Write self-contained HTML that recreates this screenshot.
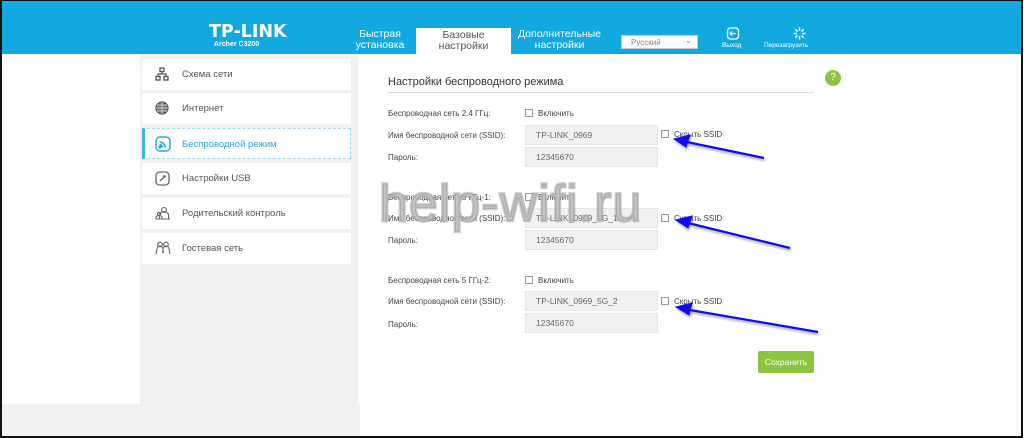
<!DOCTYPE html>
<html><head><meta charset="utf-8"><style>
*{margin:0;padding:0;box-sizing:border-box}
body{width:1024px;height:438px;position:relative;background:#fff;font-family:"Liberation Sans","DejaVu Sans",sans-serif;overflow:hidden}
.frame{position:absolute;left:0;top:0;width:1023px;height:438px;border:2px solid #111;border-top-width:1px}
.hdr{position:absolute;left:2px;top:1px;width:1019px;height:53px;background:#12a9e0}
.abs{position:absolute}
.logo{left:209px;top:22px;color:#fff;font-weight:bold;font-size:17.5px;letter-spacing:0px;font-family:"DejaVu Sans",sans-serif}
.model{left:214px;top:41px;color:#fff;font-weight:bold;font-size:7px}
.tab{color:#fff;font-size:10.5px;text-align:center;line-height:11px}
.tabsel{left:416px;top:28px;width:95px;height:26px;background:#fff;color:#555;padding-top:2px}
.side{left:140px;top:54px;width:218px;height:350px;background:#f1f1f1}
.bot{left:2px;top:404px;width:358px;height:32px;background:#f1f1f1}
.item{position:absolute;left:142px;width:209px;height:31px;background:#fff;font-size:9.5px;color:#555;padding-left:40px;line-height:31px}
.item svg{position:absolute;left:13px;top:8px}
.sel{border:1px dashed #9dd6ee;border-left:3px solid #39b4e3;color:#2aa7dc;padding-left:37px}
.sel svg{left:10px;top:7px}
.lab{position:absolute;left:388px;font-size:8px;color:#444}
.cb{position:absolute;width:8px;height:8px;border:1px solid #999;background:#fff}
.cbl{position:absolute;font-size:8px;color:#444}
.inp{position:absolute;left:525px;width:133px;height:20px;background:#f1f1f1;border:1px solid #e6e6e6;font-size:8.5px;color:#666;padding-left:10px;line-height:19px}
</style></head><body>
<div class="hdr"></div>
<div class="abs logo">TP-LINK</div>
<div class="abs model">Archer C3200</div>
<div class="abs tab" style="left:340px;top:29px;width:80px">Быстрая<br>установка</div>
<div class="abs tab tabsel">Базовые<br>настройки</div>
<div class="abs tab" style="left:512px;top:29px;width:95px">Дополнительные<br>настройки</div>
<div class="abs" style="left:621px;top:35px;width:77px;height:14px;background:#fff;border:1px solid #ccc;font-size:8px;color:#888;padding:2px 0 0 9px">Русский<span style="position:absolute;right:5px;top:0px;color:#6a8fb0;font-size:8px">&#8964;</span></div>
<svg class="abs" style="left:726px;top:27px" width="14" height="13" viewBox="0 0 14 13"><rect x="1.5" y="1" width="11" height="11" rx="3" fill="none" stroke="#fff" stroke-width="1.3"/><path d="M10 6.5H4M6 4.5L4 6.5 6 8.5" fill="none" stroke="#fff" stroke-width="1.2"/></svg>
<div class="abs" style="left:722px;top:42px;font-size:6.5px;color:#fff">Выход</div>
<svg class="abs" style="left:793px;top:27px" width="13" height="13" viewBox="0 0 13 13" stroke="#fff" stroke-width="1.5"><path d="M6.5 0.5V4M6.5 9V12.5M0.5 6.5H4M9 6.5H12.5M2.3 2.3L4.5 4.5M8.5 8.5L10.7 10.7M2.3 10.7L4.5 8.5M8.5 4.5L10.7 2.3"/></svg>
<div class="abs" style="left:764px;top:42px;font-size:6.5px;color:#fff">Перезагрузить</div>

<div class="abs side"></div>
<div class="abs bot"></div>

<div class="item" style="top:59px"><svg width="14" height="14" viewBox="0 0 14 14" fill="none" stroke="#555" stroke-width="1.3"><rect x="5" y="1" width="4" height="3.5"/><rect x="1" y="9.5" width="4" height="3.5"/><rect x="9" y="9.5" width="4" height="3.5"/><path d="M7 4.5V7M3 9.5V7H11V9.5"/></svg>Схема сети</div>
<div class="item" style="top:93px"><svg width="14" height="14" viewBox="0 0 14 14" fill="none" stroke="#555" stroke-width="1.2"><circle cx="7" cy="7" r="6" fill="#777"/><path d="M1 7H13M7 1V13M2 4H12M2 10H12" stroke="#ddd" stroke-width=".8"/></svg>Интернет</div>
<div class="item sel" style="top:128px"><svg width="16" height="16" viewBox="0 0 16 16" fill="none" stroke="#2aa7dc" stroke-width="1.4"><rect x="1" y="1" width="14" height="14" rx="4"/><path d="M4.5 6a5.5 5.5 0 0 1 5.5 5.5M4.5 8.5a3 3 0 0 1 3 3" stroke-width="1.6"/><circle cx="5" cy="11" r="1" fill="#2aa7dc"/></svg>Беспроводной режим</div>
<div class="item" style="top:163px"><svg width="15" height="15" viewBox="0 0 15 15" fill="none" stroke="#666" stroke-width="1.3"><rect x="1" y="1" width="13" height="13" rx="3.5"/><path d="M5 10L10 5M8 5H10V7"/></svg>Настройки USB</div>
<div class="item" style="top:198px"><svg width="16" height="14" viewBox="0 0 16 14" fill="none" stroke="#666" stroke-width="1.1"><circle cx="9" cy="4" r="2.5"/><path d="M4.5 13V9a4.5 3.5 0 0 1 9 0V13"/><circle cx="4" cy="8" r="1.6"/><path d="M1 13V11.5a3 2 0 0 1 6 0V13M1 13H15"/></svg>Родительский контроль</div>
<div class="item" style="top:233px"><svg width="16" height="14" viewBox="0 0 16 14" fill="none" stroke="#666" stroke-width="1.1"><circle cx="5" cy="3.5" r="2.3"/><circle cx="11" cy="3.5" r="2.3"/><path d="M1 13L2 8a3 3 0 0 1 6 0V12M8 12V8a3 3 0 0 1 6 0L15 13M7 11H9"/></svg>Гостевая сеть</div>

<div class="abs" style="left:388px;top:76px;font-size:11px;color:#333">Настройки беспроводного режима</div>
<div class="abs" style="left:388px;top:92px;width:426px;height:1px;background:#ddd"></div>
<div class="abs" style="left:825px;top:70px;width:16px;height:16px;border-radius:50%;background:#8cc63f;color:#fff;font-size:10px;text-align:center;line-height:16px">?</div>

<div class="lab" style="top:109px">Беспроводная сеть 2.4 ГГц:</div>
<div class="cb" style="left:525px;top:109px"></div><div class="cbl" style="left:538px;top:109px">Включить</div>
<div class="lab" style="top:131px">Имя беспроводной сети (SSID):</div>
<div class="inp" style="top:125px">TP-LINK_0969</div>
<div class="cb" style="left:661px;top:130px"></div><div class="cbl" style="left:674px;top:130px">Скрыть SSID</div>
<div class="lab" style="top:153px">Пароль:</div>
<div class="inp" style="top:147px">12345670</div>

<div class="lab" style="top:193px">Беспроводная сеть 5 ГГц-1:</div>
<div class="cb" style="left:525px;top:193px"></div><div class="cbl" style="left:538px;top:193px">Включить</div>
<div class="lab" style="top:214px">Имя беспроводной сети (SSID):</div>
<div class="inp" style="top:208px">TP-LINK_0969_5G_1</div>
<div class="cb" style="left:661px;top:214px"></div><div class="cbl" style="left:674px;top:214px">Скрыть SSID</div>
<div class="lab" style="top:236px">Пароль:</div>
<div class="inp" style="top:230px">12345670</div>

<div class="lab" style="top:276px">Беспроводная сеть 5 ГГц-2:</div>
<div class="cb" style="left:525px;top:276px"></div><div class="cbl" style="left:538px;top:276px">Включить</div>
<div class="lab" style="top:297px">Имя беспроводной сети (SSID):</div>
<div class="inp" style="top:291px">TP-LINK_0969_5G_2</div>
<div class="cb" style="left:661px;top:297px"></div><div class="cbl" style="left:674px;top:297px">Скрыть SSID</div>
<div class="lab" style="top:320px">Пароль:</div>
<div class="inp" style="top:313px">12345670</div>

<div class="abs" style="left:758px;top:351px;width:56px;height:22px;background:#8cc63f;border-radius:2px;color:#fff;font-size:8.5px;text-align:center;line-height:22px">Сохранить</div>

<div class="abs" style="left:379px;top:174px;font-size:52px;color:rgba(140,140,140,0.5);letter-spacing:1px;font-family:'Liberation Sans',sans-serif;-webkit-text-stroke:2.5px rgba(150,150,150,0.5);text-shadow:0 0 1px #fff">help-wifi.ru</div>

<svg class="abs" style="left:0;top:0" width="1024" height="438">
<defs><filter id="s"><feDropShadow dx="1" dy="2" stdDeviation="1" flood-color="#000" flood-opacity=".35"/></filter></defs>
<g stroke="#1010ee" stroke-width="2.2" fill="#1010ee" filter="url(#s)">
<path d="M764 158L682 141"/><path d="M674 139L690 135L686 147Z" stroke-width="1"/>
<path d="M790 248L684 222"/><path d="M676 220L692 216L688 228Z" stroke-width="1"/>
<path d="M818 332L684 309"/><path d="M676 307L692 303L689 315Z" stroke-width="1"/>
</g></svg>
<div class="frame"></div>
</body></html>
